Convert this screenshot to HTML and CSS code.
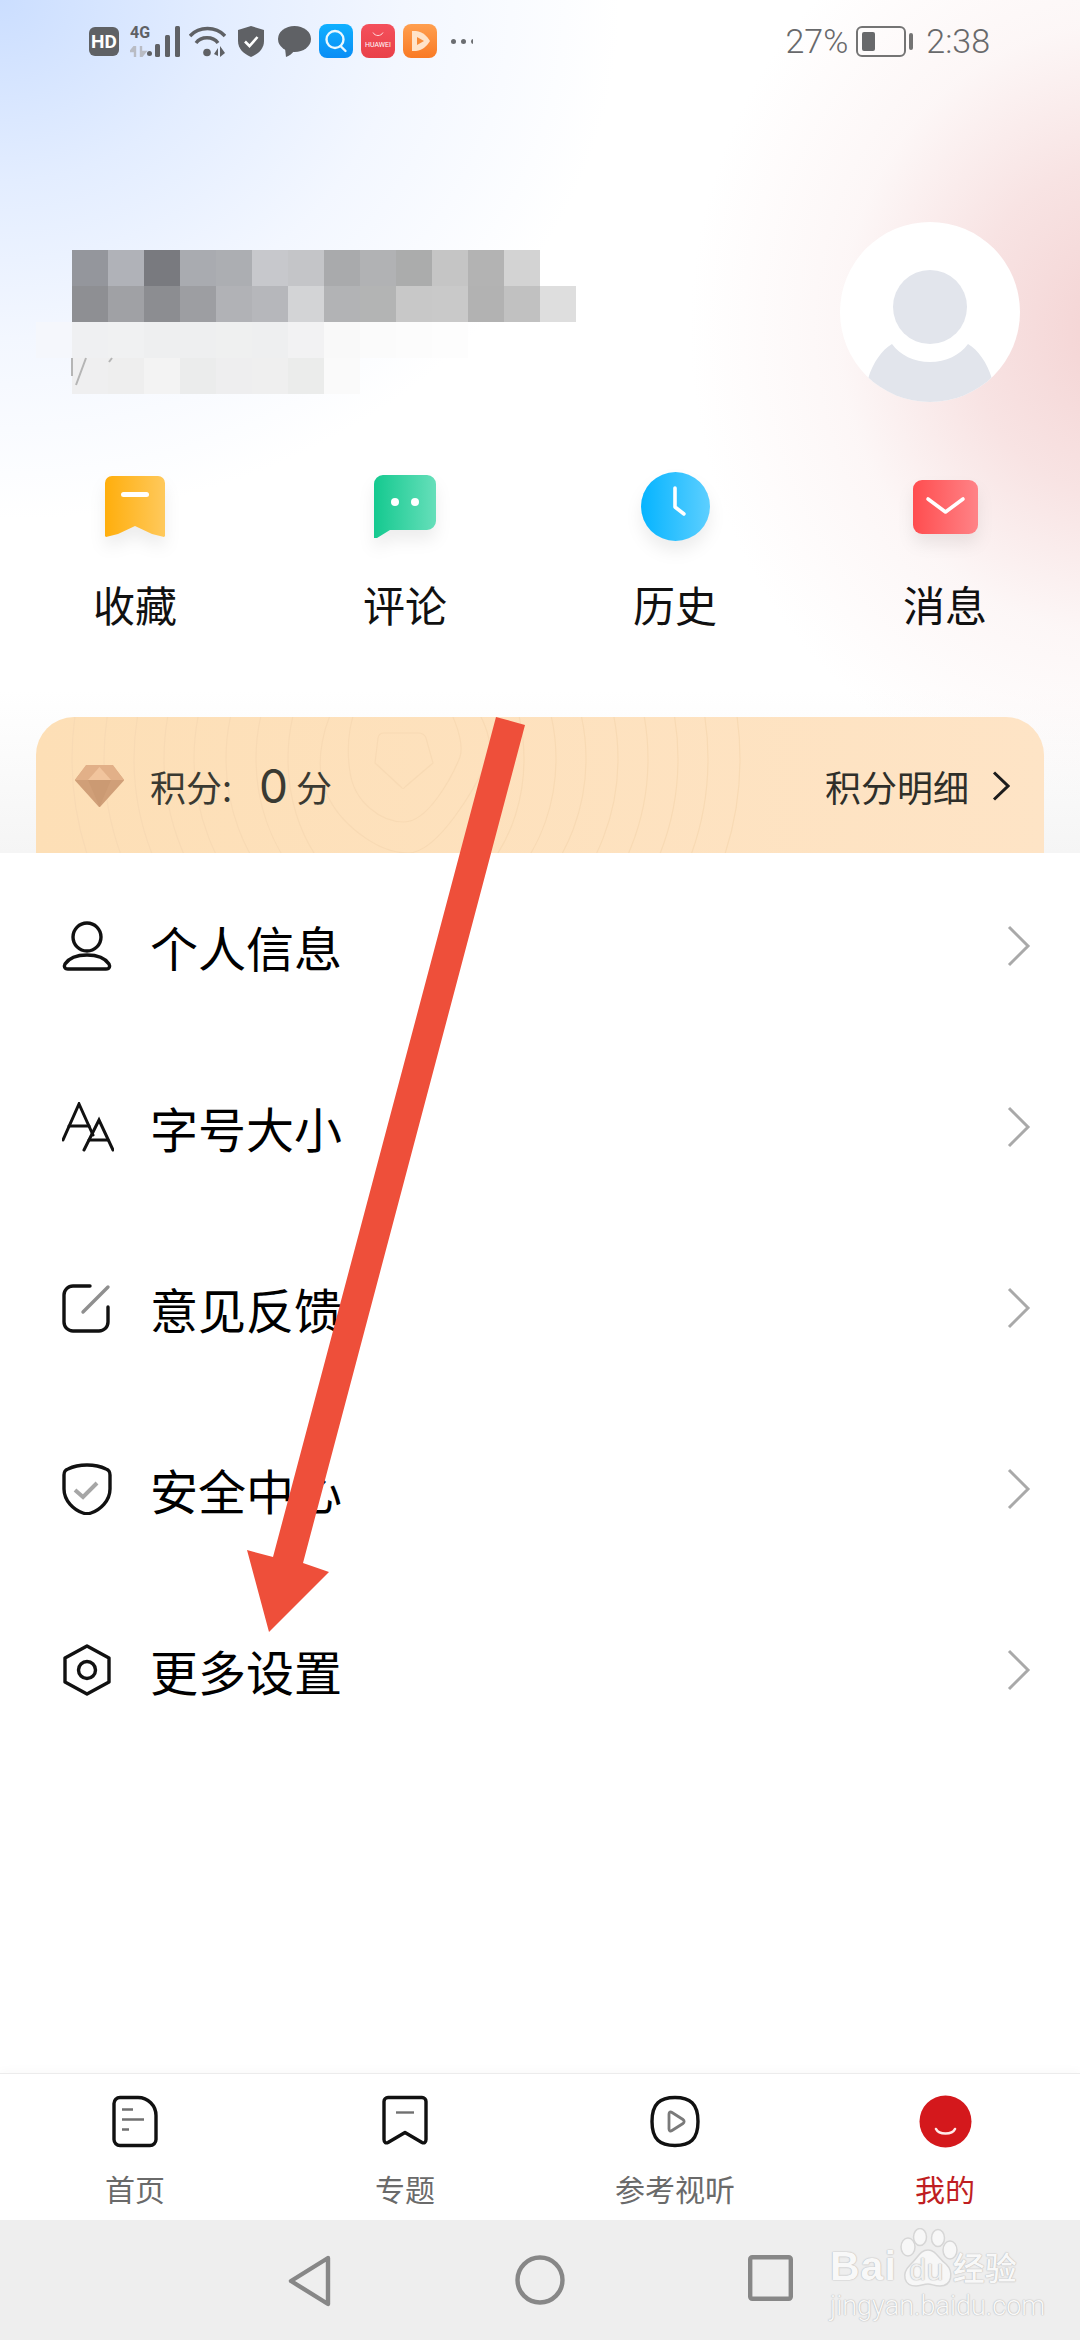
FILE: index.html
```html
<!DOCTYPE html>
<html lang="zh">
<head>
<meta charset="utf-8">
<title>我的</title>
<link rel="stylesheet" href="styles.css">
</head>
<body>
<div class="screen">
  <div class="top">
    <div class="status">
      <div class="status-left">
        <span class="hd">HD</span>
        <div class="net">
          <div class="net-labels"><span class="g4">4G</span><svg class="arrows" width="18" height="11" viewBox="0 0 18 11"><path d="M5 0v11M5 0L1 5h4M11 11V0M11 11l4-5h-4" fill="none" stroke="#b9bcc4" stroke-width="2.400"/></svg></div>
          <svg class="bars" width="33" height="31" viewBox="0 0 33 31"><circle cx="2.500" cy="27.500" r="2.500" fill="#5f6165"/><rect x="8" y="18" width="5" height="13" rx="1.500" fill="#5f6165"/><rect x="18" y="9" width="5" height="22" rx="1.500" fill="#5f6165"/><rect x="28" y="0" width="5" height="31" rx="1.500" fill="#5f6165"/></svg>
        </div>
        <svg class="s-icon wifi" width="37" height="31" viewBox="0 0 37 31"><g fill="none" stroke="#5f6165" stroke-width="3.400"><path d="M1 10C10 0 27 0 36 10"/><path d="M7 17C12 10 24 10 29 17"/></g><circle cx="18" cy="26.500" r="3.800" fill="#5f6165"/><path d="M25 28l4-6v8zM31 20v11l5-4z" fill="#5f6165"/></svg>
        <svg class="s-icon shield" width="26" height="31" viewBox="0 0 26 31"><path d="M13 0L26 4v11c0 8-6 13-13 16C6 28 0 23 0 15V4z" fill="#5f6165"/><path d="M7 15.500l4.500 4.500L19.500 11" fill="none" stroke="#fff" stroke-width="2.600"/></svg>
        <svg class="s-icon bubble" width="33" height="31" viewBox="0 0 33 31"><ellipse cx="16.500" cy="13" rx="16.500" ry="13" fill="#5f6165"/><path d="M7 22l1 9c3-1 6-3 8-6z" fill="#5f6165"/></svg>
        <div class="apps">
          <svg class="app" width="34" height="34" viewBox="0 0 34 34"><defs><linearGradient id="ab" x1="0" y1="0" x2="0" y2="1"><stop offset="0" stop-color="#0fb0ff"/><stop offset="1" stop-color="#0a8df5"/></linearGradient></defs><rect width="34" height="34" rx="8" fill="url(#ab)"/><circle cx="16" cy="15.500" r="8.500" fill="none" stroke="#e8f8ff" stroke-width="2.400"/><path d="M21.500 22l5 5" stroke="#e8f8ff" stroke-width="2.400" stroke-linecap="round"/></svg>
          <div class="app app-huawei"><svg width="12" height="5" viewBox="0 0 12 5"><path d="M1 0.500c2 4 8 4 10 0" fill="none" stroke="#ffd9dc" stroke-width="1"/></svg><span class="hw">HUAWEI</span></div>
          <svg class="app" width="34" height="34" viewBox="0 0 34 34"><defs><linearGradient id="ao" x1="0" y1="0" x2="0" y2="1"><stop offset="0" stop-color="#ff9f4f"/><stop offset="1" stop-color="#f97a25"/></linearGradient></defs><rect width="34" height="34" rx="8" fill="url(#ao)"/><path d="M9 7h4c7 1 11 5 14 10-3 5-7 9-14 10H9z" fill="#ffe3c8"/><path d="M14 13l7 4-7 4z" fill="#f98a35"/></svg>
        </div>
        <div class="dots"><i></i><i></i><i></i></div>
      </div>
      <div class="status-right">
        <span>27%</span>
        <div class="battery"><div class="batt-body"><div class="batt-fill"></div></div><div class="batt-cap"></div></div>
        <span>2:38</span>
      </div>
    </div>

    <div class="profile">
      <svg class="mosaic" width="540" height="144" viewBox="0 0 540 144" aria-hidden="true">
        <g>
          <rect x="0" width="36.500" height="36.500" y="0" fill="#94969c"/><rect x="36" width="36.500" height="36.500" y="0" fill="#b0b2b8"/><rect x="72" width="36.500" height="36.500" y="0" fill="#797a7f"/><rect x="108" width="36.500" height="36.500" y="0" fill="#a9abb0"/><rect x="144" width="36.500" height="36.500" y="0" fill="#acaeb2"/><rect x="180" width="36.500" height="36.500" y="0" fill="#c7c8cc"/><rect x="216" width="36.500" height="36.500" y="0" fill="#c4c5c8"/><rect x="252" width="36.500" height="36.500" y="0" fill="#a9aaac"/><rect x="288" width="36.500" height="36.500" y="0" fill="#b1b2b4"/><rect x="324" width="36.500" height="36.500" y="0" fill="#abacac"/><rect x="360" width="36.500" height="36.500" y="0" fill="#c5c5c5"/><rect x="396" width="36.500" height="36.500" y="0" fill="#b3b3b3"/><rect x="432" width="36" height="36.500" y="0" fill="#d3d3d3"/>
          <rect x="0" width="36.500" height="36" y="36" fill="#8e8f93"/><rect x="36" width="36.500" height="36" y="36" fill="#a0a1a5"/><rect x="72" width="36.500" height="36" y="36" fill="#8c8d91"/><rect x="108" width="36.500" height="36" y="36" fill="#9d9ea2"/><rect x="144" width="36.500" height="36" y="36" fill="#b1b2b6"/><rect x="180" width="36.500" height="36" y="36" fill="#b6b7bb"/><rect x="216" width="36.500" height="36" y="36" fill="#d3d4d6"/><rect x="252" width="36.500" height="36" y="36" fill="#b2b3b5"/><rect x="288" width="36.500" height="36" y="36" fill="#b3b4b4"/><rect x="324" width="36.500" height="36" y="36" fill="#c8c8c8"/><rect x="360" width="36.500" height="36" y="36" fill="#c9c9c9"/><rect x="396" width="36.500" height="36" y="36" fill="#b2b2b2"/><rect x="432" width="36.500" height="36" y="36" fill="#c1c1c1"/><rect x="468" width="36" height="36" y="36" fill="#dedede"/>
          <rect x="-36" width="36.500" height="36" y="72" fill="#f5f7fc"/><rect x="0" width="36.500" height="36" y="72" fill="#eff0f2"/><rect x="36" width="36.500" height="36" y="72" fill="#f0f1f2"/><rect x="72" width="36.500" height="36" y="72" fill="#eeeff0"/><rect x="108" width="36.500" height="36" y="72" fill="#eeeff0"/><rect x="144" width="36.500" height="36" y="72" fill="#eff0f0"/><rect x="180" width="36.500" height="36" y="72" fill="#eeeff0"/><rect x="216" width="36.500" height="36" y="72" fill="#f2f2f3"/><rect x="252" width="36.500" height="36" y="72" fill="#f9f9f9"/><rect x="288" width="36.500" height="36" y="72" fill="#fbfbfb"/><rect x="324" width="36.500" height="36" y="72" fill="#fcfcfc"/><rect x="360" width="36" height="36" y="72" fill="#fdfdfd"/>
          <rect x="0" width="36.500" height="36" y="108" fill="#efeff0"/><rect x="36" width="36.500" height="36" y="108" fill="#eeeeee"/><rect x="72" width="36.500" height="36" y="108" fill="#f3f3f3"/><rect x="108" width="36.500" height="36" y="108" fill="#ebecec"/><rect x="144" width="36.500" height="36" y="108" fill="#eeeeef"/><rect x="180" width="36.500" height="36" y="108" fill="#efefef"/><rect x="216" width="36.500" height="36" y="108" fill="#ebeceb"/><rect x="252" width="36" height="36" y="108" fill="#fafafa"/>
          <path d="M0 108v18M14 108L4 135M40 108l-3 4" stroke="#b5b5b5" stroke-width="2" fill="none"/>
        </g>
      </svg>
      <svg class="avatar" width="180" height="180" viewBox="0 0 180 180"><defs><clipPath id="avc"><circle cx="90" cy="90" r="90"/></clipPath></defs><circle cx="90" cy="90" r="90" fill="#fff"/><g clip-path="url(#avc)"><path d="M28 180V157C33 140 42 128 52 122C60 133 74 140 90 140C106 140 120 133 128 122C138 128 147 140 152 157V180z" fill="#e2e5ec"/></g><circle cx="90" cy="85" r="37" fill="#e2e5ec"/></svg>
    </div>

    <div class="shortcuts">
      <div class="shortcut">
        <div class="shortcut-icon">
          <svg class="drop" width="60" height="62" viewBox="0 0 60 62"><defs><linearGradient id="gy" x1="0" y1="0" x2="1" y2="0"><stop offset="0" stop-color="#ffae0c"/><stop offset="1" stop-color="#ffc95c"/></linearGradient></defs><path d="M7 0H53a7 7 0 0 1 7 7V60L59 61 47 58 30 50 13 58 1 61 0 60V7A7 7 0 0 1 7 0z" fill="url(#gy)"/><rect x="16" y="16" width="28" height="5" rx="2.500" fill="#fff"/></svg>
        </div>
        <span class="shortcut-label">收藏</span>
      </div>
      <div class="shortcut">
        <div class="shortcut-icon">
          <svg class="drop" width="62" height="63" viewBox="0 0 62 63"><defs><linearGradient id="gg" x1="0" y1="0" x2="1" y2="0"><stop offset="0" stop-color="#14c98f"/><stop offset="1" stop-color="#66dfba"/></linearGradient></defs><path d="M9 0H53a9 9 0 0 1 9 9V46a9 9 0 0 1-9 9H16L3 63H0V9A9 9 0 0 1 9 0z" fill="url(#gg)"/><circle cx="21" cy="27" r="4" fill="#fff"/><circle cx="41" cy="27" r="4" fill="#fff"/></svg>
        </div>
        <span class="shortcut-label">评论</span>
      </div>
      <div class="shortcut">
        <div class="shortcut-icon">
          <svg class="drop" width="69" height="69" viewBox="0 0 69 69"><defs><linearGradient id="gb" x1="0" y1="0" x2="1" y2="0"><stop offset="0" stop-color="#05b4ff"/><stop offset="1" stop-color="#5dcfff"/></linearGradient></defs><circle cx="34.500" cy="34.500" r="34.500" fill="url(#gb)"/><path d="M34 16V35L43 42" fill="none" stroke="#fff" stroke-width="3.600" stroke-linecap="round" stroke-linejoin="round"/></svg>
        </div>
        <span class="shortcut-label">历史</span>
      </div>
      <div class="shortcut">
        <div class="shortcut-icon">
          <svg class="drop" width="65" height="54" viewBox="0 0 65 54"><defs><linearGradient id="gr" x1="0" y1="0" x2="1" y2="0"><stop offset="0" stop-color="#ff4d4f"/><stop offset="1" stop-color="#ff8387"/></linearGradient></defs><rect width="65" height="54" rx="9" fill="url(#gr)"/><path d="M15 19l17.500 13L50 19" fill="none" stroke="#fff" stroke-width="3.600" stroke-linecap="round" stroke-linejoin="round"/></svg>
        </div>
        <span class="shortcut-label">消息</span>
      </div>
    </div>

    <div class="points">
      <svg class="contours" width="1008" height="136" viewBox="0 0 1008 136" aria-hidden="true">
        <g fill="none" stroke="#f8dab4" stroke-width="1.200">
          <path d="M348 16H382Q388 16 390 21L397 46 369 70Q367 73 365 70L339 46 342 21Q343 16 348 16z"/>
          <path d="M332 -30C312 -5 310 30 314 55C318 85 345 105 368 105C392 105 416 60 424 40C430 20 410 -15 402 -30"/>
          <path d="M312 -30C285 0 278 50 290 75C302 105 340 136 372 136C402 136 440 70 452 42C460 20 440 -10 428 -30"/>
          <ellipse cx="370" cy="42" rx="118" ry="150"/>
          <ellipse cx="370" cy="42" rx="150" ry="170"/>
          <ellipse cx="370" cy="42" rx="180" ry="190"/>
          <ellipse cx="370" cy="42" rx="212" ry="215"/>
          <ellipse cx="370" cy="42" rx="242" ry="240"/>
          <ellipse cx="370" cy="42" rx="272" ry="265"/>
          <ellipse cx="370" cy="42" rx="302" ry="290"/>
          <ellipse cx="370" cy="42" rx="334" ry="320"/>
        </g>
      </svg>
      <div class="points-left">
        <svg class="diamond" width="49" height="42" viewBox="0 0 49 42"><path d="M12 1H37L48 15 24.500 41 1 15z" fill="#d09f78" stroke="#d09f78" stroke-width="2" stroke-linejoin="round"/><path d="M11 0H38L49 15H0z" fill="#e2b088"/><path d="M24.500 2L36 15H13z" fill="#f1c49d"/><path d="M13 15H36L24.500 42z" fill="#cb9a73"/></svg>
        <span class="points-label">积分:</span>
        <span class="points-num">0</span>
        <span class="points-unit">分</span>
      </div>
      <div class="points-right">
        <span>积分明细</span>
        <svg width="18" height="30" viewBox="0 0 18 30"><path d="M2 1.500L16 15 2 28.500" fill="none" stroke="#1c1c1c" stroke-width="3"/></svg>
      </div>
    </div>
  </div>

  <div class="menu">
    <div class="row">
      <svg width="50" height="50" viewBox="0 0 50 50"><g fill="none" stroke="#111" stroke-width="3.400"><circle cx="25" cy="16" r="14"/><path d="M6 48h38c4 0 4-3 3-5-4-6-13-9-22-9s-18 3-22 9c-1 2-1 5 3 5z"/></g></svg>
      <span class="row-text">个人信息</span>
      <svg width="24" height="42" viewBox="0 0 24 42"><path d="M2 2L21 21 2 40" fill="none" stroke="#a9a9a9" stroke-width="3"/></svg>
    </div>
    <div class="row">
      <svg width="52" height="50" viewBox="0 0 52 50"><g fill="none" stroke="#111" stroke-width="3" stroke-linecap="round"><path d="M1 38L17 2 31 33"/><path d="M7 24H27"/><path d="M22 48L37 18 51 48"/><path d="M27 38H46"/></g></svg>
      <span class="row-text">字号大小</span>
      <svg width="24" height="42" viewBox="0 0 24 42"><path d="M2 2L21 21 2 40" fill="none" stroke="#a9a9a9" stroke-width="3"/></svg>
    </div>
    <div class="row">
      <svg width="50" height="50" viewBox="0 0 50 50"><g fill="none" stroke="#111" stroke-width="3.400" stroke-linecap="round"><path d="M28 3H11A9 9 0 0 0 2 12V39A9 9 0 0 0 11 48H37A9 9 0 0 0 46 39V24"/></g><path d="M21 29L46 4" stroke="#8f8f8f" stroke-width="3.400" stroke-linecap="round"/></svg>
      <span class="row-text">意见反馈</span>
      <svg width="24" height="42" viewBox="0 0 24 42"><path d="M2 2L21 21 2 40" fill="none" stroke="#a9a9a9" stroke-width="3"/></svg>
    </div>
    <div class="row">
      <svg width="50" height="52" viewBox="0 0 50 52"><path d="M25 2C33 2 40 4 44 6 47 7 48 9 48 12V26C48 38 38 47 29 50 26 51 24 51 21 50 12 47 2 38 2 26V12C2 9 3 7 6 6 10 4 17 2 25 2z" fill="none" stroke="#111" stroke-width="3.400"/><path d="M13 27L21 34 35 20" fill="none" stroke="#a6a6a6" stroke-width="4"/></svg>
      <span class="row-text">安全中心</span>
      <svg width="24" height="42" viewBox="0 0 24 42"><path d="M2 2L21 21 2 40" fill="none" stroke="#a9a9a9" stroke-width="3"/></svg>
    </div>
    <div class="row">
      <svg width="50" height="52" viewBox="0 0 50 52"><path d="M25 2L47 14V38L25 50 3 38V14z" fill="none" stroke="#111" stroke-width="3.400" stroke-linejoin="round"/><circle cx="25" cy="26" r="8.500" fill="none" stroke="#111" stroke-width="3.400"/></svg>
      <span class="row-text">更多设置</span>
      <svg width="24" height="42" viewBox="0 0 24 42"><path d="M2 2L21 21 2 40" fill="none" stroke="#a9a9a9" stroke-width="3"/></svg>
    </div>
  </div>

  <div class="tabbar">
    <div class="tab">
      <svg width="46" height="52" viewBox="0 0 46 52"><path d="M8 2H26A18 18 0 0 1 44 20V44A6 6 0 0 1 38 50H8A6 6 0 0 1 2 44V8A6 6 0 0 1 8 2z" fill="none" stroke="#111" stroke-width="3.400"/><path d="M10 14H21M10 24H32M10 34H17" stroke="#707070" stroke-width="2.400"/></svg>
      <span class="tab-label">首页</span>
    </div>
    <div class="tab">
      <svg width="46" height="52" viewBox="0 0 46 52"><path d="M6 2H40A4 4 0 0 1 44 6V44C44 47 42 48 40 47L23 37 6 47C4 48 2 47 2 44V6A4 4 0 0 1 6 2z" fill="none" stroke="#111" stroke-width="3.400" stroke-linejoin="round"/><path d="M14 17H32" stroke="#707070" stroke-width="2.400"/></svg>
      <span class="tab-label">专题</span>
    </div>
    <div class="tab">
      <svg width="50" height="52" viewBox="0 0 50 52"><path d="M25 2C40 2 48 8 48 26S40 50 25 50 2 44 2 26 10 2 25 2z" fill="none" stroke="#111" stroke-width="3.400"/><path d="M19 18.500V33.500C19 35.500 20.500 36 22 35L33 28C34.500 27 34.500 25 33 24L22 17C20.500 16 19 16.500 19 18.500z" fill="none" stroke="#7a7a7a" stroke-width="2.800"/></svg>
      <span class="tab-label">参考视听</span>
    </div>
    <div class="tab tab-active">
      <svg width="53" height="53" viewBox="0 0 53 53"><circle cx="26.500" cy="26.500" r="26" fill="#d4181c"/><path d="M17 34C20 40 33 40 36 34" fill="none" stroke="#ffeaea" stroke-width="2.600" stroke-linecap="round"/></svg>
      <span class="tab-label">我的</span>
    </div>
  </div>

  <div class="sysnav">
    <svg width="44" height="52" viewBox="0 0 44 52"><path d="M40 3L3 26 40 49z" fill="none" stroke="#878787" stroke-width="4.400" stroke-linejoin="round"/></svg>
    <svg width="50" height="50" viewBox="0 0 50 50"><circle cx="25" cy="25" r="22.500" fill="none" stroke="#878787" stroke-width="4.400"/></svg>
    <svg width="45" height="46" viewBox="0 0 45 46"><rect x="2.200" y="2.200" width="40.600" height="41.600" rx="2" fill="none" stroke="#878787" stroke-width="4.400"/></svg>
  </div>

  <svg class="arrow" width="1080" height="2340" viewBox="0 0 1080 2340" aria-hidden="true"><path d="M496 717L525 725 303 1563 329 1572 269 1632 247 1550 273 1557z" fill="#ee4f3a"/></svg>

  <div class="watermark">
    <svg class="paw" width="64" height="66" viewBox="0 0 64 66"><g fill="#f7f7f7" stroke="#d6d6d6" stroke-width="1.500"><ellipse cx="12" cy="19" rx="7" ry="9"/><ellipse cx="24" cy="9" rx="6.500" ry="8.500"/><ellipse cx="42" cy="10" rx="6.500" ry="8.500"/><ellipse cx="54" cy="22" rx="7" ry="9"/><path d="M32 22C40 22 42 30 50 36 58 44 56 58 44 58 38 58 36 56 32 56 28 56 24 58 20 58 8 58 5 46 14 37 22 30 24 22 32 22z"/></g></svg>
    <div class="wm-main"><span class="wm-bai">Bai</span><span class="wm-du">du</span><span class="wm-cn">经验</span></div>
    <div class="wm-url">jingyan.baidu.com</div>
  </div>
</div>
</body>
</html>
```
FILE: styles.css
```css
* { box-sizing: border-box; }
html, body { margin: 0; padding: 0; }
body {
  width: 1080px;
  height: 2340px;
  overflow: hidden;
  background: #fff;
  font-family: "Noto Sans CJK SC", "Noto Sans", sans-serif;
}
svg { display: block; flex: none; }
.screen {
  position: relative;
  width: 1080px;
  height: 2340px;
  display: flex;
  flex-direction: column;
  overflow: hidden;
  background: #fff;
}

.top {
  height: 853px;
  padding-top: 24px;
  display: flex;
  flex-direction: column;
  background:
    radial-gradient(ellipse 430px 470px at 1120px 330px, rgba(243, 208, 208, 0.95) 0%, rgba(246, 220, 220, 0.8) 35%, rgba(250, 238, 238, 0.5) 65%, rgba(255, 255, 255, 0) 100%),
    radial-gradient(ellipse 620px 520px at 0 0, #cbdeff 0%, #e3edff 35%, #f3f7ff 65%, rgba(255, 255, 255, 0) 100%),
    linear-gradient(180deg, #fff 0, #fff 690px, #f5f5f5 853px);
}

.status {
  height: 34px;
  padding: 0 90px 0 89px;
  display: flex;
  justify-content: space-between;
  align-items: center;
}
.status-left { display: flex; align-items: center; }
.hd {
  width: 30px;
  height: 29px;
  margin-right: 11px;
  border-radius: 6px;
  background: #5f6165;
  color: #fff;
  font: 700 19px/29px "Roboto", sans-serif;
  text-align: center;
}
.net { display: flex; align-items: flex-end; margin-right: 9px; }
.net-labels { width: 17px; display: flex; flex-direction: column; justify-content: space-between; height: 31px; }
.g4 { font: 700 16px/14px "Liberation Sans Narrow", "Roboto", sans-serif; color: #5f6165; }
.s-icon.wifi { margin-right: 12px; }
.s-icon.shield { margin-right: 14px; }
.s-icon.bubble { margin-right: 8px; }
.apps { display: flex; gap: 8px; margin-right: 14px; }
.app-huawei {
  width: 34px;
  height: 34px;
  border-radius: 8px;
  background: linear-gradient(180deg, #f4505c, #e94048);
  display: flex;
  flex-direction: column;
  align-items: center;
  padding-top: 8px;
}
.hw { font: 400 7px/8px "Roboto", sans-serif; color: #fff; margin-top: 4px; }
.dots { display: flex; gap: 5px; width: 22px; overflow: hidden; }
.dots i { display: block; flex: none; width: 5px; height: 5px; border-radius: 50%; background: #6b6d71; }
.status-right {
  display: flex;
  align-items: center;
  gap: 8px;
  color: #68696b;
  font: 300 34px/34px "Roboto", sans-serif;
}
.battery { display: flex; align-items: center; gap: 3px; margin-right: 5px; }
.batt-body {
  width: 50px;
  height: 31px;
  padding: 4px;
  border: 2px solid #747474;
  border-radius: 6px;
}
.batt-fill { width: 13px; height: 100%; background: #68696b; border-radius: 2px; }
.batt-cap { width: 4px; height: 17px; background: #747474; border-radius: 2px; }

.profile {
  height: 180px;
  margin-top: 164px;
  padding: 0 60px 0 72px;
  display: flex;
  justify-content: space-between;
  align-items: flex-start;
}
.mosaic { margin-top: 28px; overflow: visible; }

.shortcuts { margin-top: 70px; display: grid; grid-template-columns: repeat(4, 270px); }
.shortcut { display: flex; flex-direction: column; align-items: center; }
.shortcut-icon { height: 69px; display: flex; align-items: center; justify-content: center; }
.drop { filter: drop-shadow(0 10px 8px rgba(0, 0, 0, 0.07)); }
.shortcut-label { margin-top: 34px; font-size: 42px; line-height: 58px; color: #111; }

.points {
  position: relative;
  margin: auto 36px 0;
  height: 136px;
  border-radius: 38px 38px 0 0;
  overflow: hidden;
  background: linear-gradient(90deg, #fddfb6, #fee4c6);
  display: flex;
  justify-content: space-between;
  align-items: center;
  padding: 2px 34px 0 39px;
}
.contours { position: absolute; left: 0; top: 0; }
.points-left, .points-right { position: relative; display: flex; align-items: center; }
.diamond { margin-right: 26px; }
.points-label { font-size: 36px; line-height: 48px; color: #3a3a32; width: 109px; }
.points-num { font: 400 46px/48px "Inter", sans-serif; color: #3a3a32; margin-right: 8px; }
.points-unit { font-size: 36px; line-height: 48px; color: #3a3a32; }
.points-right { gap: 23px; font-size: 36px; line-height: 48px; color: #2f2f2a; }

.menu { margin-top: 2px; }
.row {
  height: 181px;
  padding: 0 49px 0 62px;
  display: grid;
  grid-template-columns: 88px 1fr 24px;
  align-items: center;
}
.row-text { font-size: 48px; line-height: 66px; color: #000; }

.tabbar {
  margin-top: auto;
  height: 147px;
  border-top: 1px solid #ececec;
  box-shadow: 0 -4px 8px rgba(0, 0, 0, 0.02);
  display: grid;
  grid-template-columns: repeat(4, 270px);
  padding-top: 21px;
  background: #fff;
}
.tab { display: flex; flex-direction: column; align-items: center; }
.tab svg { height: 53px; }
.tab-label { margin-top: 19px; font-size: 30px; line-height: 42px; color: #6a6a6a; }
.tab-active .tab-label { color: #bf1e22; }

.sysnav {
  height: 120px;
  background: #eee;
  padding: 35px 287px 0 288px;
  display: flex;
  align-items: flex-start;
  justify-content: space-between;
}

.arrow { position: absolute; left: 0; top: 0; pointer-events: none; }

.watermark {
  position: absolute;
  left: 830px;
  top: 2228px;
  width: 200px;
  color: #f8f8f8;
  text-shadow: 0 0 1.5px #b8b8b8, 0 0 1px #b8b8b8;
}
.paw { position: absolute; left: 66px; top: 0; }
.wm-main { position: relative; display: flex; align-items: baseline; height: 56px; padding-top: 20px; font: 700 41px/36px "Liberation Sans", sans-serif; letter-spacing: 1px; }
.wm-du { font-size: 30px; font-weight: 400; width: 52px; text-align: center; margin-left: 4px; color: #f0f0f0; }
.wm-cn { font: 500 32px/36px "Noto Sans CJK SC", sans-serif; letter-spacing: 0; }
.wm-url { font: 300 27px/28px "Roboto", sans-serif; margin-top: 8px; white-space: nowrap; }
```
